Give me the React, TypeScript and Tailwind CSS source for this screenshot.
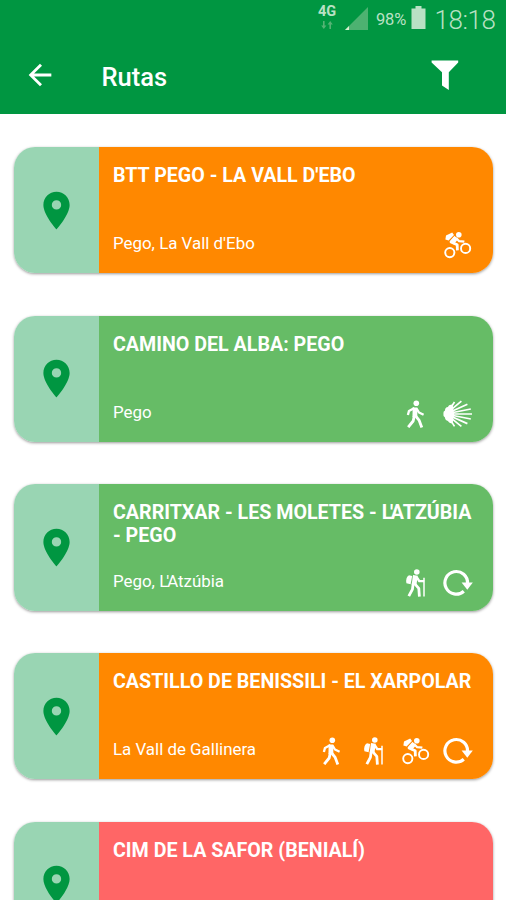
import type { ReactNode } from 'react';
import { MdArrowBack, MdLocationOn } from 'react-icons/md';

type Activity = 'walk' | 'hike' | 'bike' | 'loop' | 'shell';

interface Route {
  title: ReactNode;
  places?: ReactNode;
  color: string;
  activities: Activity[];
}

// Elided article, set tight against the apostrophe
const Elided = () => <span className="tracking-[-0.12em]">L'</span>;

const routes: Route[] = [
  { title: "BTT PEGO - LA VALL D'EBO", places: "Pego, La Vall d'Ebo", color: 'bg-[#ff8800]', activities: ['bike'] },
  { title: 'CAMINO DEL ALBA: PEGO', places: 'Pego', color: 'bg-[#66bc66]', activities: ['walk', 'shell'] },
  {
    title: <>CARRITXAR - LES MOLETES - <Elided />ATZÚBIA - PEGO</>,
    places: <>Pego, <Elided />Atzúbia</>,
    color: 'bg-[#66bc66]',
    activities: ['hike', 'loop'],
  },
  { title: 'CASTILLO DE BENISSILI - EL XARPOLAR', places: 'La Vall de Gallinera', color: 'bg-[#ff8800]', activities: ['walk', 'hike', 'bike', 'loop'] },
  { title: 'CIM DE LA SAFOR (BENIALÍ)', color: 'bg-[#ff6666]', activities: [] },
];

function WalkIcon() {
  return (
    <svg viewBox="0 0 28 28" className="h-7 w-7 shrink-0" fill="none" stroke="currentColor" strokeLinejoin="round">
      <circle cx="15.3" cy="3.3" r="2.8" fill="currentColor" stroke="none" />
      <path d="M14 7.4 13.9 17" strokeWidth="4.8" />
      <path d="M13.4 8 8 10.9 6.9 15" strokeWidth="2.3" />
      <path d="m15.6 8.6 2.4 3.9 4.6 2.2" strokeWidth="2.3" />
      <path d="M13.2 16 12.2 21 7.2 27.2" strokeWidth="2.8" />
      <path d="m14.6 16 3.6 4.4 2.6 7" strokeWidth="2.8" />
    </svg>
  );
}

function HikeIcon() {
  return (
    <svg viewBox="0 0 28 28" className="h-7 w-7 shrink-0" fill="none" stroke="currentColor" strokeLinejoin="round">
      <circle cx="15.8" cy="3" r="2.8" fill="currentColor" stroke="none" />
      <path d="M8 6.2 11.2 7 9.6 15.2 5.4 14.2Q4.4 8.4 8 6.2z" fill="currentColor" stroke="none" />
      <path d="M14.4 6.4 13 16" strokeWidth="4.8" />
      <path d="m15.6 8 2.6 4 5 .2" strokeWidth="2.3" />
      <path d="M23 8.8V27.6" strokeWidth="1.5" />
      <path d="M12.2 14.6 11.4 20.4 7.8 27.2" strokeWidth="2.8" />
      <path d="m13.6 14.6 4.2 4.8.6 8.2" strokeWidth="2.8" />
    </svg>
  );
}

function BikeIcon() {
  return (
    <svg viewBox="0 0 28 28" className="h-7 w-7 shrink-0 overflow-visible" fill="none" stroke="currentColor">
      <circle cx="6.8" cy="21.6" r="4.6" strokeWidth="1.9" />
      <circle cx="22.6" cy="17.4" r="4.6" strokeWidth="1.9" />
      <circle cx="15.8" cy="3.7" r="2.8" fill="currentColor" stroke="none" />
      <path d="M3 4.6 9.2 1.4 11 4 5.6 9.6 2.4 8.6z" fill="currentColor" stroke="none" />
      <path d="M12.4 5.8 8 11 14.2 13.8 14.4 19.4" strokeWidth="2.8" strokeLinejoin="round" />
      <path d="m13 7 3.2 3.2 5.2.4" strokeWidth="2.3" strokeLinejoin="round" />
      <path d="m8.8 12 4.6-5.2" strokeWidth="4.6" />
    </svg>
  );
}

function LoopIcon() {
  return (
    <svg viewBox="0 0 28 28" className="h-7 w-7 shrink-0 overflow-visible">
      <path d="M20.8 22.2A11.3 11.3 0 1 1 24.5 14.6" fill="none" stroke="currentColor" strokeWidth="3.2" />
      <path d="M18.6 13.4h11.2L24.3 20.8z" fill="currentColor" />
    </svg>
  );
}

function ShellIcon() {
  return (
    <svg viewBox="0 0 28 28" className="h-7 w-7 shrink-0 overflow-visible">
      <path
        d="M5 12 11.5 2M5 12.4 18.4 1.2M5 13 24.4 4.2M5 13.5 27.8 9M5 14H29M5 14.5 27.8 19M5 15 24.4 23.6M5 15.6 18.4 26.4M5 16 11.5 26.4"
        stroke="currentColor"
        strokeWidth="1.7"
      />
      <path d="M.4 14Q0 11 2 10.4 2 7.4 5 7 6 4.6 9.6 4.6L11 14 9.6 23.4Q6 23.4 5 21 2 20.6 2 17.6 0 17 .4 14z" fill="currentColor" />
    </svg>
  );
}

const activityIcons = {
  walk: WalkIcon,
  hike: HikeIcon,
  bike: BikeIcon,
  loop: LoopIcon,
  shell: ShellIcon,
};

function StatusBar() {
  return (
    <div className="flex h-[37px] items-start justify-end pr-[10.5px] text-[#b9e1c4]">
      <div className="mt-[5px] flex w-5 flex-col items-center">
        <span className="text-[14.5px] leading-[14px] font-bold">4G</span>
        <svg viewBox="0 0 12 8" className="mt-[2px] h-2 w-3 text-[#55b374]" fill="currentColor">
          <path d="M2 0h1.6v4.6H5.4L2.8 8 .2 4.6H2zM8.4 8H10V3.4h1.8L9.2 0 6.6 3.4h1.8z" />
        </svg>
      </div>
      <svg viewBox="0 0 23 23" className="mt-[7px] ml-2 h-[23px] w-[23px]">
        <path d="M23 0v23H0z" fill="#4db271" />
        <path d="M4 19V23H0z" fill="#d8f0cf" />
      </svg>
      <span className="mt-[10px] ml-2 w-[31px] text-[16.5px] leading-[19px] tracking-[-0.2px] whitespace-nowrap">98%</span>
      <svg viewBox="0 0 14 23" className="mt-[6px] ml-1 h-[23px] w-[15px]" fill="currentColor">
        <path d="M4 0h6v2.6h4V23H0V2.6h4z" />
      </svg>
      <span className="mt-[5px] ml-[8.5px] w-[61px] text-[26px] leading-[30px] font-light tracking-[-0.4px]">18:18</span>
    </div>
  );
}

function Header() {
  return (
    <header className="h-[114px] shrink-0 bg-[#009641]">
      <StatusBar />
      <div className="flex h-[76px] items-center px-[23px] text-white">
        <button>
          <MdArrowBack className="h-[34px] w-[34px]" />
        </button>
        <h1 className="mt-[3px] ml-[44.5px] text-[25.5px] leading-[30px] font-medium">Rutas</h1>
        <button className="mr-[24px] ml-auto">
          <svg viewBox="0 0 28 30" className="h-[30px] w-7" fill="currentColor">
            <path d="M.6.4h26.6v2L17.8 12.2V30L11 25.4V12.2L.6 2.4z" />
          </svg>
        </button>
      </div>
    </header>
  );
}

function RouteCard({ route }: { route: Route }) {
  return (
    <article className="flex h-[126.4px] shrink-0 overflow-hidden rounded-[21px] shadow-[0_1px_3px_rgba(0,0,0,0.4)]">
      <div className="flex w-[85px] shrink-0 items-center justify-center bg-[#99d5b3]">
        <MdLocationOn className="h-[45px] w-[45px] text-[#009641]" />
      </div>
      <div className={`flex min-w-0 flex-1 flex-col justify-between pt-[17px] pr-[22px] pb-[14px] pl-[14px] text-white ${route.color}`}>
        <h2 className="-mr-2 text-[19.65px] leading-[23px] font-bold">{route.title}</h2>
        <div className="flex items-center justify-between">
          <p className="-mt-[4px] text-[16.9px] leading-[20px]">{route.places}</p>
          <div className="flex gap-[14px]">
            {route.activities.map((a) => {
              const Icon = activityIcons[a];
              return <Icon key={a} />;
            })}
          </div>
        </div>
      </div>
    </article>
  );
}

export default function App() {
  return (
    <div className="flex h-[900px] w-[506px] flex-col overflow-hidden bg-white font-[Roboto,sans-serif]">
      <Header />
      <main className="flex min-h-0 flex-1 flex-col gap-[42.3px] overflow-hidden pt-[33px] pr-[13px] pl-[14px]">
        {routes.map((route, i) => (
          <RouteCard key={i} route={route} />
        ))}
      </main>
    </div>
  );
}
